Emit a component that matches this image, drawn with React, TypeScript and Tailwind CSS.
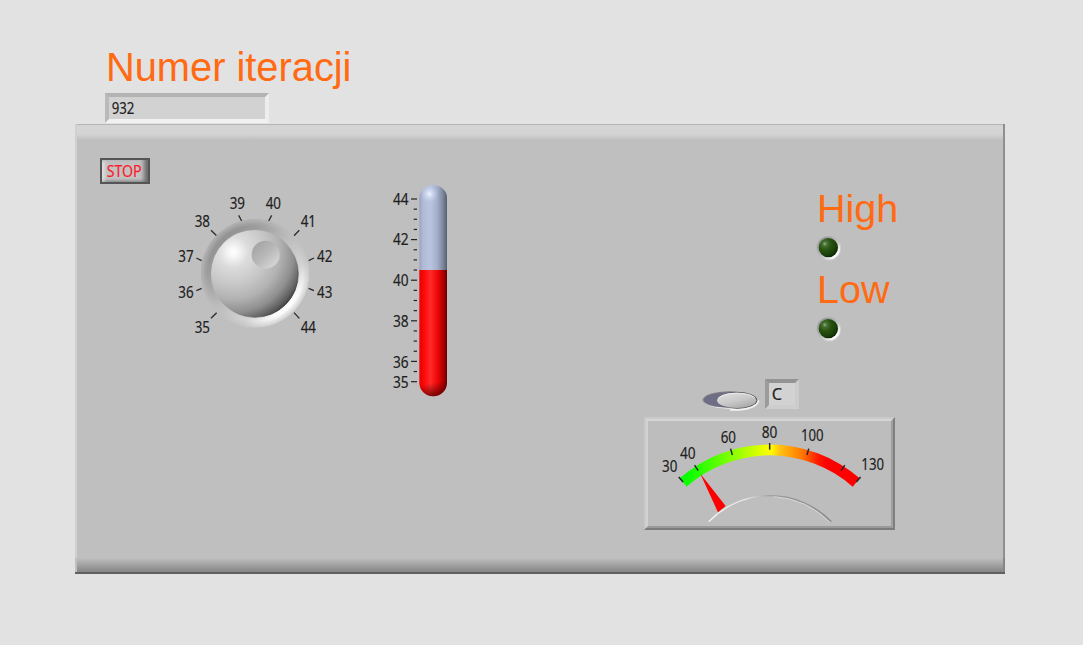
const FONT = '"Noto Sans", sans-serif';

function polar(cx: number, cy: number, r: number, deg: number) {
  const a = (deg * Math.PI) / 180;
  return { x: cx + r * Math.sin(a), y: cy - r * Math.cos(a) };
}

function Label({ x, y, w, children }: { x: number; y: number; w: number; children: string }) {
  return (
    <text x={x} y={y} fontFamily={FONT} fontSize="47" fill="#202020" stroke="#202020" strokeWidth="0.5" textLength={w} lengthAdjust="spacingAndGlyphs">
      {children}
    </text>
  );
}

const knobMarks: [string, number, number, string][] = [
  ['35', 89, 443, 'M138 400L155 383'],
  ['36', 40, 340, 'M94 317L110 310'],
  ['37', 40, 231, 'M94 219L110 227'],
  ['38', 89, 125, 'M138 136L155 152'],
  ['39', 194, 72, 'M221 91L230 108'],
  ['40', 302, 72, 'M320 91L311 108'],
  ['41', 407, 125, 'M403 136L387 152'],
  ['42', 456, 231, 'M447 219L431 227'],
  ['43', 456, 340, 'M447 317L431 310'],
  ['44', 407, 443, 'M403 400L387 383'],
];

function Knob() {
  return (
    <svg className="mt-px ml-[90px] block h-[160px] w-[180px]" viewBox="0 0 540 480">
      <defs>
        <linearGradient id="ring" x1="0.14" y1="0.14" x2="0.86" y2="0.86">
          <stop offset="0" stopColor="#8e8e8e" />
          <stop offset="0.2" stopColor="#9c9c9c" />
          <stop offset="0.5" stopColor="#bebebe" />
          <stop offset="0.75" stopColor="#d4d4d4" />
          <stop offset="0.92" stopColor="#ffffff" />
        </linearGradient>
        <radialGradient id="ringEdge">
          <stop offset="0.88" stopColor="#bfbfbf" stopOpacity="0" />
          <stop offset="1" stopColor="#bfbfbf" stopOpacity="0.75" />
        </radialGradient>
        <radialGradient id="ball" gradientUnits="userSpaceOnUse" cx="205" cy="201" r="228">
          <stop offset="0" stopColor="#ffffff" />
          <stop offset="0.06" stopColor="#f7f7f7" />
          <stop offset="0.2" stopColor="#dcdcdc" />
          <stop offset="0.42" stopColor="#c8c8c8" />
          <stop offset="0.62" stopColor="#b2b2b2" />
          <stop offset="0.8" stopColor="#8e8e8e" />
          <stop offset="0.92" stopColor="#606060" />
          <stop offset="1" stopColor="#363636" />
        </radialGradient>
        <linearGradient id="rim" gradientUnits="userSpaceOnUse" x1="290" y1="290" x2="365" y2="365">
          <stop offset="0" stopColor="#555" stopOpacity="0" />
          <stop offset="1" stopColor="#3c3c3c" />
        </linearGradient>
        <linearGradient id="dimple" x1="0.1" y1="0.1" x2="0.9" y2="0.95">
          <stop offset="0" stopColor="#a3a3a3" />
          <stop offset="0.5" stopColor="#b9b9b9" />
          <stop offset="1" stopColor="#dadada" />
        </linearGradient>
      </defs>
      {knobMarks.map(([t, x, y, d]) => (
        <g key={t}>
          <path d={d} stroke="#2c2c2c" strokeWidth="4" />
          <Label x={x} y={y} w={46}>{t}</Label>
        </g>
      ))}
      <circle cx="270" cy="265" r="162" fill="url(#ring)" />
      <circle cx="270" cy="265" r="162" fill="url(#ringEdge)" />
      <circle cx="269" cy="266" r="131" fill="url(#ball)" />
      <circle cx="269" cy="266" r="131" fill="none" stroke="url(#rim)" strokeWidth="3" />
      <circle cx="302" cy="209" r="42" fill="url(#dimple)" />
    </svg>
  );
}

function Thermometer() {
  const ticks = Array.from({ length: 19 }, (_, i) => 72 + i * 30.45);
  return (
    <svg className="mt-[51px] block h-[235px] w-[90px] shrink-0" viewBox="0 0 270 705">
      <defs>
        <linearGradient id="glass">
          <stop offset="0" stopColor="#9aa4bd" />
          <stop offset="0.14" stopColor="#b0bbd6" />
          <stop offset="0.4" stopColor="#b9c4e0" />
          <stop offset="0.65" stopColor="#a3aeca" />
          <stop offset="0.85" stopColor="#7e879c" />
          <stop offset="1" stopColor="#555d70" />
        </linearGradient>
        <linearGradient id="fluid">
          <stop offset="0" stopColor="#e80000" />
          <stop offset="0.16" stopColor="#ff0808" />
          <stop offset="0.4" stopColor="#ff2a2a" />
          <stop offset="0.65" stopColor="#f00808" />
          <stop offset="0.85" stopColor="#b00000" />
          <stop offset="1" stopColor="#6c0000" />
        </linearGradient>
        <radialGradient id="shine" gradientUnits="userSpaceOnUse" cx="148" cy="57" r="28">
          <stop offset="0" stopColor="#f2f6ff" stopOpacity="0.95" />
          <stop offset="0.4" stopColor="#dbe4f8" stopOpacity="0.6" />
          <stop offset="1" stopColor="#c0cbe6" stopOpacity="0" />
        </radialGradient>
        <linearGradient id="foot" x1="0" y1="0" x2="0.3" y2="1">
          <stop offset="0.25" stopColor="#500" stopOpacity="0" />
          <stop offset="1" stopColor="#500" stopOpacity="0.75" />
        </linearGradient>
      </defs>
      {ticks.map((y, i) => (
        <line key={i} x1={i % 4 === 0 || i === 18 ? 93 : 101} x2="111" y1={y} y2={y} stroke="#222" strokeWidth="3.6" />
      ))}
      <Label x={39} y={90} w={47}>44</Label>
      <Label x={39} y={211} w={47}>42</Label>
      <Label x={39} y={334} w={47}>40</Label>
      <Label x={39} y={455} w={47}>38</Label>
      <Label x={39} y={578} w={47}>36</Label>
      <Label x={39} y={639} w={47}>35</Label>
      <path d="M118 68 A41.5 38 0 0 1 201 68 V287 H118 Z" fill="url(#glass)" />
      <circle cx="148" cy="57" r="28" fill="url(#shine)" />
      <path d="M118 285 H201 V623 A41.5 41 0 0 1 118 623 Z" fill="url(#fluid)" />
      <path d="M118 618 H201 V623 A41.5 41 0 0 1 118 623 Z" fill="url(#foot)" />
    </svg>
  );
}

function Led() {
  return (
    <svg className="mt-2 mb-[9px] -ml-px block size-6 overflow-visible" viewBox="0 0 72 72">
      <defs>
        <radialGradient id="led" cx="0.32" cy="0.3" r="0.78">
          <stop offset="0" stopColor="#8fb07f" />
          <stop offset="0.16" stopColor="#456f32" />
          <stop offset="0.42" stopColor="#28530f" />
          <stop offset="0.75" stopColor="#1a400a" />
          <stop offset="1" stopColor="#0c2204" />
        </radialGradient>
        <linearGradient id="ledRing" x1="0.1" y1="0.1" x2="0.9" y2="0.9">
          <stop offset="0" stopColor="#8e8e8e" />
          <stop offset="0.45" stopColor="#b5b5b5" />
          <stop offset="0.65" stopColor="#d0d0d0" />
          <stop offset="0.9" stopColor="#ffffff" />
        </linearGradient>
      </defs>
      <circle cx="38" cy="36" r="37" fill="url(#ledRing)" opacity="0.4" />
      <circle cx="38" cy="36" r="34" fill="url(#ledRing)" />
      <circle cx="37" cy="35" r="29" fill="url(#led)" />
    </svg>
  );
}

function Switch() {
  return (
    <svg className="mt-[10px] block h-[22px] w-[64px]" viewBox="30 58 192 66">
      <defs>
        <linearGradient id="swEdge" x1="0" y1="0" x2="0.4" y2="1">
          <stop offset="0" stopColor="#6f6f6f" />
          <stop offset="0.5" stopColor="#a0a0a0" />
          <stop offset="1" stopColor="#f0f0f0" />
        </linearGradient>
        <linearGradient id="swThumb" x1="0.15" y1="0.05" x2="0.8" y2="1">
          <stop offset="0" stopColor="#dedede" />
          <stop offset="0.5" stopColor="#c9c9c9" />
          <stop offset="1" stopColor="#a5a5a5" />
        </linearGradient>
      </defs>
      <path d="M120 120 Q196 122 206 92" fill="none" stroke="#f2f2f2" strokeWidth="6" />
      <ellipse cx="120" cy="91" rx="83" ry="26" fill="url(#swEdge)" />
      <ellipse cx="119" cy="91" rx="79" ry="23" fill="#6d6d86" />
      <ellipse cx="142" cy="92" rx="60" ry="25" fill="#555" />
      <ellipse cx="140" cy="92" rx="59" ry="23" fill="url(#swThumb)" />
      <path d="M85 86 Q98 71 140 70.500 Q180 71 194 84" fill="none" stroke="#ececec" strokeWidth="3" />
    </svg>
  );
}

const meterTicks = [30, 40, 60, 80, 100, 120, 130];

function Meter() {
  return (
    <div className="mt-[6px] ml-1 h-[113px] w-[251px] border-2 border-t-[#cacaca] border-r-[#808080] border-b-[#7c7c7c] border-l-[#cacaca]">
      <div className="h-[109px] w-[247px] border-2 border-t-[#d6d6d6] border-r-[#a0a0a0] border-b-[#9a9a9a] border-l-[#d2d2d2] bg-[#bdbdbd]">
        <svg className="block h-[105px] w-[243px]" viewBox="25 153 729 315">
          <defs>
            <linearGradient id="scale" gradientUnits="userSpaceOnUse" x1="120" x2="660" y1="0" y2="0">
              <stop offset="0" stopColor="#00ff00" />
              <stop offset="0.08" stopColor="#18ff00" />
              <stop offset="0.28" stopColor="#80ff00" />
              <stop offset="0.49" stopColor="#f8ff00" />
              <stop offset="0.51" stopColor="#fff800" />
              <stop offset="0.56" stopColor="#ffc010" />
              <stop offset="0.68" stopColor="#ff7800" />
              <stop offset="0.77" stopColor="#ff1800" />
              <stop offset="0.82" stopColor="#ff0000" />
              <stop offset="1" stopColor="#ff0000" />
            </linearGradient>
            <linearGradient id="hub">
              <stop offset="0" stopColor="#f4f4f4" />
              <stop offset="0.3" stopColor="#e8e8e8" />
              <stop offset="0.5" stopColor="#a0a0a0" />
              <stop offset="0.7" stopColor="#909090" />
              <stop offset="1" stopColor="#888888" />
            </linearGradient>
          </defs>
          <path d="M120 325 A411 411 0 0 1 660 325 L639 350 A377 377 0 0 0 141 350 Z" fill="url(#scale)" />
          {meterTicks.map((v) => {
            const deg = (v - 80) * 0.82;
            const a = polar(390, 635, 396, deg);
            const b = polar(390, 635, 416, deg);
            return <line key={v} x1={a.x} y1={a.y} x2={b.x} y2={b.y} stroke="#262626" strokeWidth="4.500" />;
          })}
          <path d="M182 311 L258 408 L235 427 Z" fill="#ff0000" />
          <path d="M207 455 A256 256 0 0 1 575 455 Z" fill="#c0c0c0" fillOpacity="0.4" />
          <path d="M207 455 A256 256 0 0 1 575 455" fill="none" stroke="url(#hub)" strokeWidth="4" />
          <path d="M402 380 A256 256 0 0 1 571 458" fill="none" stroke="#d4d4d4" strokeWidth="3" />
          <Label x={67} y={305} w={46}>30</Label>
          <Label x={121} y={267} w={47}>40</Label>
          <Label x={243} y={219} w={46}>60</Label>
          <Label x={366} y={203} w={47}>80</Label>
          <Label x={484} y={214} w={68}>100</Label>
          <Label x={665} y={300} w={68}>130</Label>
        </svg>
      </div>
    </div>
  );
}

function TextField({ value, textWidth, className }: { value: string; textWidth: number; className: string }) {
  return (
    <div className={'h-[30px] border-4 bg-[#d2d2d2] ' + className}>
      <svg className="block h-[22px] w-[25px] overflow-visible" viewBox="0 0 75 66">
        <Label x={8} y={52} w={textWidth}>{value}</Label>
      </svg>
    </div>
  );
}

export default function App() {
  return (
    <main className="flex h-[645px] w-[1083px] flex-col overflow-hidden bg-[#e2e2e2] font-['Liberation_Sans',sans-serif]">
      <header className="flex flex-col pt-[47px] pl-[105px]">
        <h1 className="mb-[6px] ml-px h-10 text-[39.8px] leading-10 whitespace-nowrap text-[#ff6a13]">Numer iteracji</h1>
        <TextField
          value="932"
          textWidth={68}
          className="w-[164px] border-t-[#b3b3b3] border-r-[#ededed] border-b-[#f1f1f1] border-l-[#bababa]"
        />
      </header>
      <section className="mt-px ml-[75px] flex h-[450px] w-[930px] flex-col bg-[#bfbfbf]">
        <div className="h-px bg-[#b5b5b5]" />
        <div className="h-[15px] border-l-2 border-[#d0d0d0] bg-linear-to-b from-[#d4d4d4] from-60% to-[#bfbfbf]" />
        <div className="-mt-4 flex h-[434px] items-start border-r-2 border-l-2 border-r-[#8f8f8f] border-l-[#d0d0d0]">
          <div className="flex w-[303px] shrink-0 flex-col pt-[34px]">
            <button className="ml-[23px] h-[26px] w-[50px] border-2 border-[#555555] bg-[#c2c2c2]">
              <span className="block h-full w-full pl-1 shadow-[inset_-5px_0_4px_-1px_#6c6c6c,inset_4px_2px_3px_-1px_#dcdcdc,inset_0_-2px_2px_#a4a4a4]">
                <svg className="block h-[22px] w-[38px] overflow-visible" viewBox="0 0 114 66">
                  <text x="2" y="51" fontFamily={FONT} fontSize="47" fill="#fa1d2d" stroke="#fa1d2d" strokeWidth="0.5" textLength="105" lengthAdjust="spacingAndGlyphs">
                    STOP
                  </text>
                </svg>
              </span>
            </button>
            <div className="-ml-[2px]">
              <Knob />
            </div>
          </div>
          <Thermometer />
          <div className="ml-[170px] flex w-[270px] flex-col pt-16">
            <div className="flex flex-col pl-[177px] text-[39.5px] leading-10 text-[#ff6a13]">
              <span>High</span>
              <Led />
              <span>Low</span>
              <Led />
            </div>
            <div className="mt-[29px] flex items-start pl-[60px]">
              <Switch />
              <TextField
                value="C"
                textWidth={31}
                className="ml-px w-[34px] border-t-[#939393] border-r-[#cccccc] border-b-[#cecece] border-l-[#9b9b9b]"
              />
            </div>
            <Meter />
          </div>
        </div>
        <div className="h-[14px] border-r-2 border-l-2 border-r-[#858585] border-l-[#c0c0c0] bg-linear-to-b from-[#bfbfbf] to-[#858585]" />
        <div className="h-[2px] bg-[#606060]" />
      </section>
    </main>
  );
}
